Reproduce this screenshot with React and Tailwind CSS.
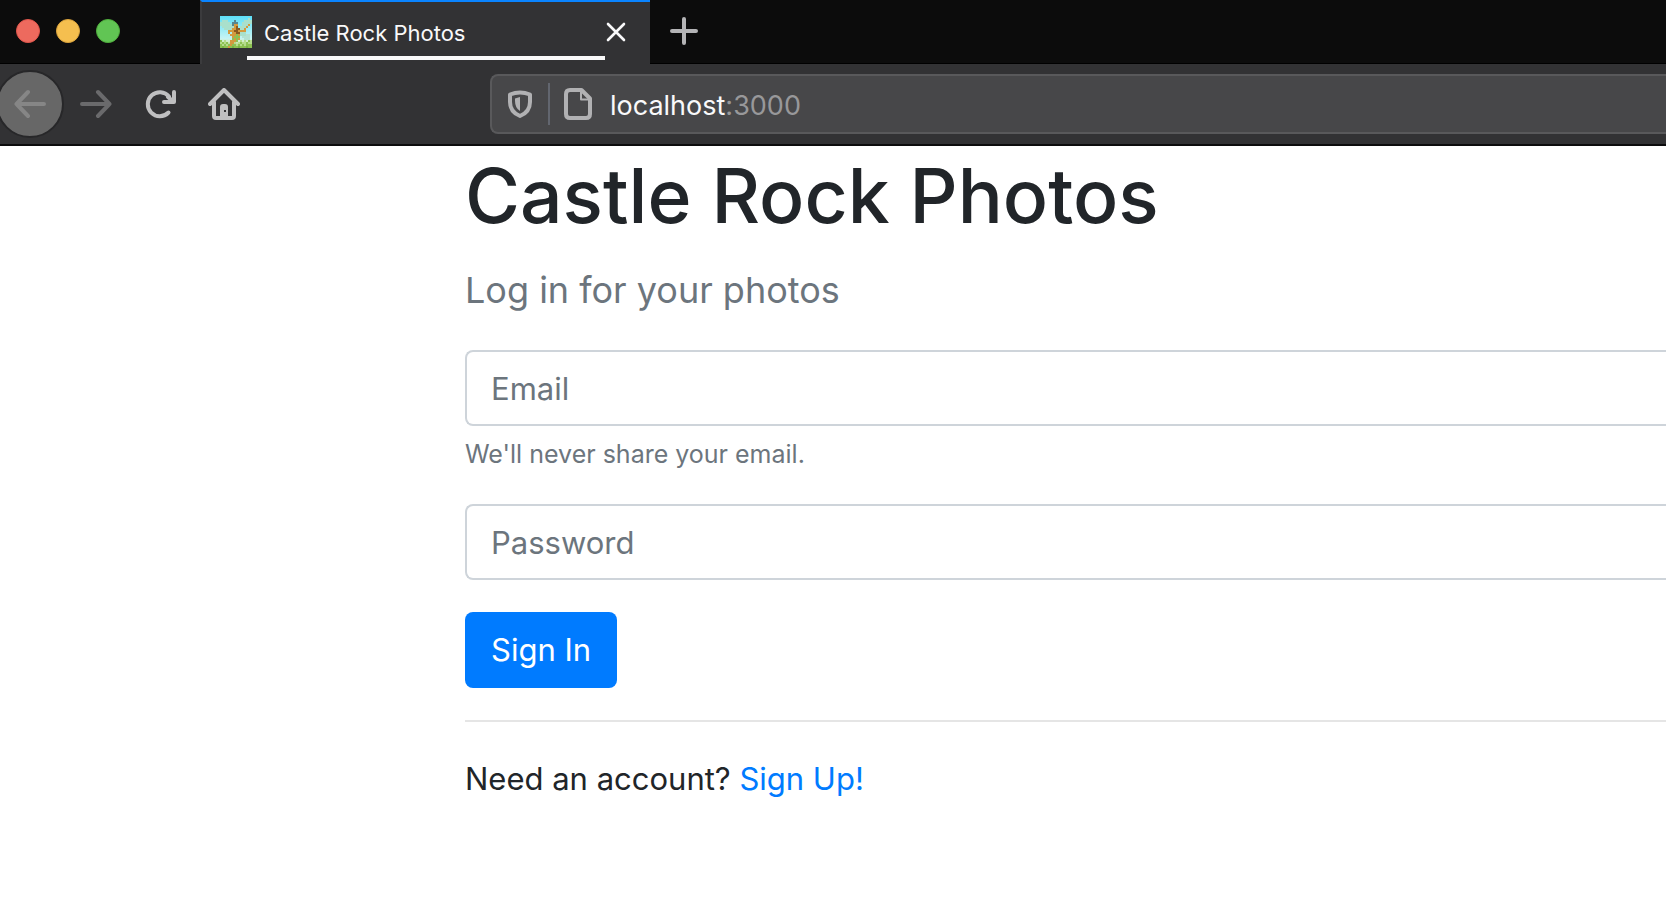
import React from "react";

const PIXELS = [
  "................",
  "..............w.",
  ".www...t....wwww",
  "wwwww.ttt..wwwww",
  "wwwwwwtoo..wwwo.",
  ".wwwwwwor.wwwo..",
  "..wwwwoorrwwo...",
  "....ooorroooo...",
  "....o.oorrwww...",
  ".....ooogowwwmm.",
  "......oggg.mmmm.",
  "......gogo..mmm.",
  "g.e..ooog.e.e.ge",
  "egeg.ooe.egeegee",
  "gegegoggegegeggg",
  "ghggoghgghggghgg",
];

const COLORS = {
  w: "#a9e0cc",
  m: "#b4e2d4",
  t: "#56868f",
  o: "#d39a3f",
  r: "#8a5a20",
  e: "#b5dc8c",
  g: "#8cc152",
  h: "#79b443",
};

function Favicon() {
  return (
    <svg viewBox="0 0 16 16" className="size-8 shrink-0" shapeRendering="crispEdges" aria-hidden="true">
      <defs>
        <linearGradient id="sky" x1="0" y1="0" x2="0" y2="1">
          <stop offset="0" stopColor="#5ddff8" />
          <stop offset="0.7" stopColor="#c6f4f4" />
          <stop offset="0.8" stopColor="#d4edc6" />
          <stop offset="1" stopColor="#8cc152" />
        </linearGradient>
      </defs>
      <rect width="16" height="16" fill="url(#sky)" />
      {PIXELS.map((row, y) =>
        row.split("").map((c, x) =>
          c === "." ? null : <rect key={`${x}-${y}`} x={x} y={y} width="1" height="1" fill={COLORS[c]} />
        )
      )}
    </svg>
  );
}

function Icon({ children, className }) {
  return (
    <svg
      viewBox="0 0 32 32"
      className={className}
      fill="none"
      stroke="currentColor"
      strokeWidth="4"
      strokeLinecap="round"
      strokeLinejoin="round"
      aria-hidden="true"
    >
      {children}
    </svg>
  );
}

function TabStrip() {
  return (
    <header className="flex h-16 bg-[#0c0c0c]">
      <div className="flex w-[200px] shrink-0 items-center gap-4 border-b border-black pb-0.5 pl-4">
        <button aria-label="Close window" className="size-6 rounded-full border border-[#e0554b] bg-[#ed6a5e]" />
        <button aria-label="Minimize window" className="size-6 rounded-full border border-[#dba33c] bg-[#f5bf4f]" />
        <button aria-label="Zoom window" className="size-6 rounded-full border border-[#4fae3c] bg-[#61c554]" />
      </div>
      <div className="relative flex w-[450px] shrink-0 items-center gap-3 border-t-2 border-l-2 border-t-[#0a84ff] border-l-[#3b3b3d] bg-[#323234] pr-6 pb-0.5 pl-[18px]">
        <Favicon />
        <span className="flex-1 pt-0.5 text-[22px] leading-8 text-[#f9f9fa]">Castle Rock Photos</span>
        <button aria-label="Close tab" className="size-5 text-[#f9f9fa]">
          <svg viewBox="0 0 20 20" className="size-5" fill="none" stroke="currentColor" strokeWidth="2.6" strokeLinecap="round" aria-hidden="true">
            <path d="M2 2 18 18M18 2 2 18" />
          </svg>
        </button>
        <div className="absolute bottom-1 left-[45px] h-1 w-[358px] bg-[#f9f9fa]" />
      </div>
      <div className="flex flex-1 items-center border-b border-black pb-0.5 pl-[18px]">
        <button aria-label="New tab" className="text-[#b4b4b6]">
          <Icon className="size-8">
            <path d="M16 4v24M4 16h24" />
          </Icon>
        </button>
      </div>
    </header>
  );
}

function Toolbar() {
  return (
    <nav className="flex h-[82px] items-center border-b-2 border-[#0c0c0d] bg-[#323234]">
      <div className="flex w-[490px] shrink-0 items-center">
        <button aria-label="Back" className="-ml-1 flex size-[68px] items-center justify-center rounded-full border-2 border-[#272729] bg-[#676767] text-[#868686]">
          <Icon className="size-8">
            <path d="M30 16H2.500M14 4 2.500 16 14 28" />
          </Icon>
        </button>
        <button aria-label="Forward" className="ml-4 text-[#6a6a6c]">
          <Icon className="size-8">
            <path d="M2 16h27.500M18 4l11.500 12L18 28" />
          </Icon>
        </button>
        <button aria-label="Reload" className="ml-8 text-[#bfbfc0]">
          <Icon className="size-8">
            <path d="M24.500 24.500A12 12 0 1 1 25 8.500" />
            <path d="M30 4v10H20" />
            <path d="M24 9 28.500 13" />
          </Icon>
        </button>
        <button aria-label="Home" className="ml-8 text-[#bfbfc0]">
          <Icon className="size-8">
            <path d="M2 16 16 2 30 16" />
            <path d="M6 14v14q0 2 2 2h16q2 0 2-2V14" />
            <path
              d="M12 31V19q0-3 3-3h2q3 0 3 3v12zM16 22v2h2v-2z"
              fill="currentColor"
              fillRule="evenodd"
              stroke="none"
            />
          </Icon>
        </button>
      </div>
      <div className="flex h-[60px] min-w-0 flex-1 items-center rounded-l-lg border-2 border-r-0 border-[#59595b] bg-[#474749] pl-4 text-[#b1b1b3]">
        <svg viewBox="0 0 24 28" className="h-7 w-6" fill="none" stroke="currentColor" strokeWidth="4" strokeLinejoin="round" aria-hidden="true">
          <path d="M2 4.500Q12 .5 22 4.500V12q0 10-10 14Q2 22 2 12z" />
          <path d="M7 8.500 12 7v14q-5-3-5-10z" fill="currentColor" stroke="none" />
        </svg>
        <div className="ml-4 h-[42px] w-0.5 bg-[#62666f]" />
        <svg viewBox="0 0 28 32" className="ml-3.5 h-8 w-7" fill="none" stroke="currentColor" strokeWidth="4" strokeLinejoin="round" aria-hidden="true">
          <path d="M6 2H17.500L26 10.500V26q0 4-4 4H6q-4 0-4-4V6q0-4 4-4z" />
          <path d="M17 3v8.500h9" strokeWidth="2" />
        </svg>
        <div role="textbox" aria-label="Address" className="ml-[18px] pt-1 text-[27px] leading-9 text-[#98989a]">
          <span className="text-[#f9f9fa]">localhost</span>:3000
        </div>
      </div>
    </nav>
  );
}

const FIELD =
  "block h-[76px] w-full rounded-l-lg border-2 border-r-0 border-[#ced4da] bg-white px-6 text-[31px] text-[#495057] placeholder:text-[#6c757d]";

export default function App() {
  return (
    <div className="min-h-screen overflow-x-hidden bg-white font-['Inter','Liberation_Sans',sans-serif] text-[#212529]">
      <TabStrip />
      <Toolbar />
      <main className="pl-[465px]">
        <h1 className="mb-4 pt-1 text-[75px] leading-[92px] font-medium whitespace-nowrap">Castle Rock Photos</h1>
        <p className="mb-8 pt-1 text-[36px] leading-[56px] text-[#6c757d]">Log in for your photos</p>
        <form onSubmit={(e) => e.preventDefault()}>
          <input type="email" aria-label="Email" aria-describedby="email-help" placeholder="Email" className={FIELD} />
          <small id="email-help" className="mt-2 mb-8 block pt-0.5 text-[25px] leading-9 text-[#6c757d]">
            We'll never share your email.
          </small>
          <input type="password" aria-label="Password" placeholder="Password" className={FIELD} />
          <button type="submit" className="mt-8 block h-[76px] rounded-lg bg-[#007bff] px-[26px] text-[31px] text-white">
            Sign In
          </button>
        </form>
        <hr className="my-8 border-t-2 border-[#e5e5e5]" />
        <p className="pt-0.5 text-[31px] leading-[46px]">
          Need an account?{" "}
          <a href="#signup" className="text-[#007bff]">
            Sign Up!
          </a>
        </p>
      </main>
    </div>
  );
}
